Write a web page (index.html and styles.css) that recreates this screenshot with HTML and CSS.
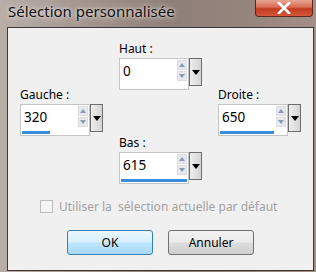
FILE: index.html
```html
<!DOCTYPE html>
<html>
<head>
<meta charset="UTF-8">
<title>Sélection personnalisée</title>
<link rel="stylesheet" href="styles.css">
</head>
<body>
    <div class="window">
        <div class="titlebar">
            <span class="title">Sélection personnalisée</span>
            <span class="close">
                <svg width="14" height="12" viewBox="0 0 14 12">
                    <path d="M2 1 L12 11 M12 1 L2 11" stroke="#ffffff" stroke-width="2.6" stroke-linecap="square"/>
                </svg>
            </span>
        </div>

        <div class="client">
            <div class="coords">
                <div class="field">
                    <label>Haut :</label>
                    <div class="spin">
                        <div class="box">
                            <div class="edit">
                                <span class="value">0</span>
                                <span class="arrows"><i class="up"></i><i class="down"></i></span>
                            </div>
                            <div class="track"><span class="bar" style="width:0%"></span></div>
                        </div>
                        <span class="drop"></span>
                    </div>
                </div>

                <div class="middle">
                    <div class="field">
                        <label>Gauche :</label>
                        <div class="spin">
                            <div class="box">
                                <div class="edit">
                                    <span class="value">320</span>
                                    <span class="arrows"><i class="up"></i><i class="down"></i></span>
                                </div>
                                <div class="track"><span class="bar" style="width:42%"></span></div>
                            </div>
                            <span class="drop"></span>
                        </div>
                    </div>
                    <div class="field">
                        <label>Droite :</label>
                        <div class="spin">
                            <div class="box">
                                <div class="edit">
                                    <span class="value">650</span>
                                    <span class="arrows"><i class="up"></i><i class="down"></i></span>
                                </div>
                                <div class="track"><span class="bar" style="width:82%"></span></div>
                            </div>
                            <span class="drop"></span>
                        </div>
                    </div>
                </div>

                <div class="field field-bas">
                    <label>Bas :</label>
                    <div class="spin">
                        <div class="box">
                            <div class="edit">
                                <span class="value">615</span>
                                <span class="arrows"><i class="up"></i><i class="down"></i></span>
                            </div>
                            <div class="track"><span class="bar" style="width:100%"></span></div>
                        </div>
                        <span class="drop"></span>
                    </div>
                </div>
            </div>

            <label class="check"><span class="checkbox"></span>Utiliser la&nbsp; sélection actuelle par défaut</label>

            <div class="buttons">
                <button class="btn btn-default">OK</button>
                <button class="btn">Annuler</button>
            </div>
        </div>
    </div>
</body>
</html>
```

FILE: styles.css
```css
body
{
    margin: 0;
    font-family: "Noto Sans", "Open Sans", Arial, sans-serif;
    font-size: 12px;
}
.window
{
    width: 316px;
    height: 272px;
    box-sizing: border-box;
    padding: 0 2px 1px 7px;
    display: flex;
    flex-direction: column;
    background: linear-gradient(90deg, #b9aea8 0%, #a49790 25%, #8e7f78 55%, #96857d 80%, #a48f86 100%);
}
.titlebar
{
    height: 27px;
    display: flex;
    align-items: flex-start;
    justify-content: space-between;
}
.title
{
    margin: 1px 0 0 1px;
    font-size: 15px;
    color: #111;
    text-shadow: 0 0 6px #e8e2de, 0 0 3px #e8e2de;
}
.close
{
    width: 56px;
    height: 16px;
    margin-right: 1px;
    display: flex;
    align-items: center;
    justify-content: center;
    border: 1px solid #5a2a22;
    border-top: 0;
    border-radius: 0 0 4px 4px;
    background: linear-gradient(180deg, #e8a795 0%, #d86a51 45%, #c23a1f 55%, #d5573a 100%);
}

/* client area */
.client
{
    flex: 1;
    background: #f0f0f0;
    border: 1px solid #3e3838;
    padding: 12px 12px 0 12px;
    display: flex;
    flex-direction: column;
}
.coords
{
    display: flex;
    flex-direction: column;
    align-items: center;
}
.middle
{
    align-self: stretch;
    display: flex;
    justify-content: space-between;
    margin-top: -4px;
}
.field-bas
{
    margin-top: -2px;
}
.field label
{
    display: block;
    height: 18px;
    color: #000;
}
.spin
{
    display: flex;
    align-items: flex-start;
}
.box
{
    width: 70px;
    height: 32px;
    box-sizing: border-box;
    background: #fff;
    border: 1px solid #c5c5c5;
    display: flex;
    flex-direction: column;
    justify-content: space-between;
}
.edit
{
    display: flex;
    justify-content: space-between;
}
.value
{
    padding: 3px 0 0 3px;
    font-size: 13.5px;
    color: #000;
}
.arrows
{
    width: 10px;
    margin: 1px 1px 0 0;
    display: flex;
    flex-direction: column;
    gap: 1px;
}
.arrows i
{
    height: 10px;
    background: #e8e8ec;
    border: 1px solid #dcdce2;
    box-sizing: border-box;
    position: relative;
}
.arrows i::after
{
    content: '';
    position: absolute;
    left: 1px;
    top: 2px;
    border-left: 3px solid transparent;
    border-right: 3px solid transparent;
}
.arrows .up::after
{
    border-bottom: 4px solid #8a9ab4;
}
.arrows .down::after
{
    border-top: 4px solid #8a9ab4;
}
.track
{
    height: 3px;
    margin: 0 1px 1px 1px;
}
.bar
{
    display: block;
    height: 3px;
    background: #3a8ee0;
}
.drop
{
    width: 13px;
    height: 28px;
    box-sizing: border-box;
    border: 1px solid #6e6e6e;
    background: linear-gradient(90deg, #eeeeee, #d4d4d4);
    display: flex;
    align-items: center;
    justify-content: center;
}
.drop::after
{
    content: '';
    border-left: 4px solid transparent;
    border-right: 4px solid transparent;
    border-top: 5px solid #000;
}

/* checkbox */
.check
{
    margin: 14px 0 0 20px;
    display: flex;
    align-items: center;
    gap: 6px;
    color: #a2a2a2;
}
.checkbox
{
    width: 13px;
    height: 13px;
    box-sizing: border-box;
    border: 1px solid #bcbcbc;
    background: #f4f4f4;
}

/* buttons */
.buttons
{
    margin-top: 15px;
    display: flex;
    justify-content: center;
    gap: 15px;
}
.btn
{
    width: 86px;
    height: 25px;
    font-family: "Noto Sans", "Open Sans", Arial, sans-serif;
    font-size: 12px;
    color: #000;
    border: 1px solid #707070;
    border-radius: 3px;
    background: linear-gradient(180deg, #f2f2f2 0%, #ebebeb 48%, #dddddd 52%, #cfcfcf 100%);
}
.btn-default
{
    border-color: #3c7fb1;
    background: linear-gradient(180deg, #eaf6fd 0%, #d9f0fc 48%, #bee6fd 52%, #a7d9f5 100%);
}
```
